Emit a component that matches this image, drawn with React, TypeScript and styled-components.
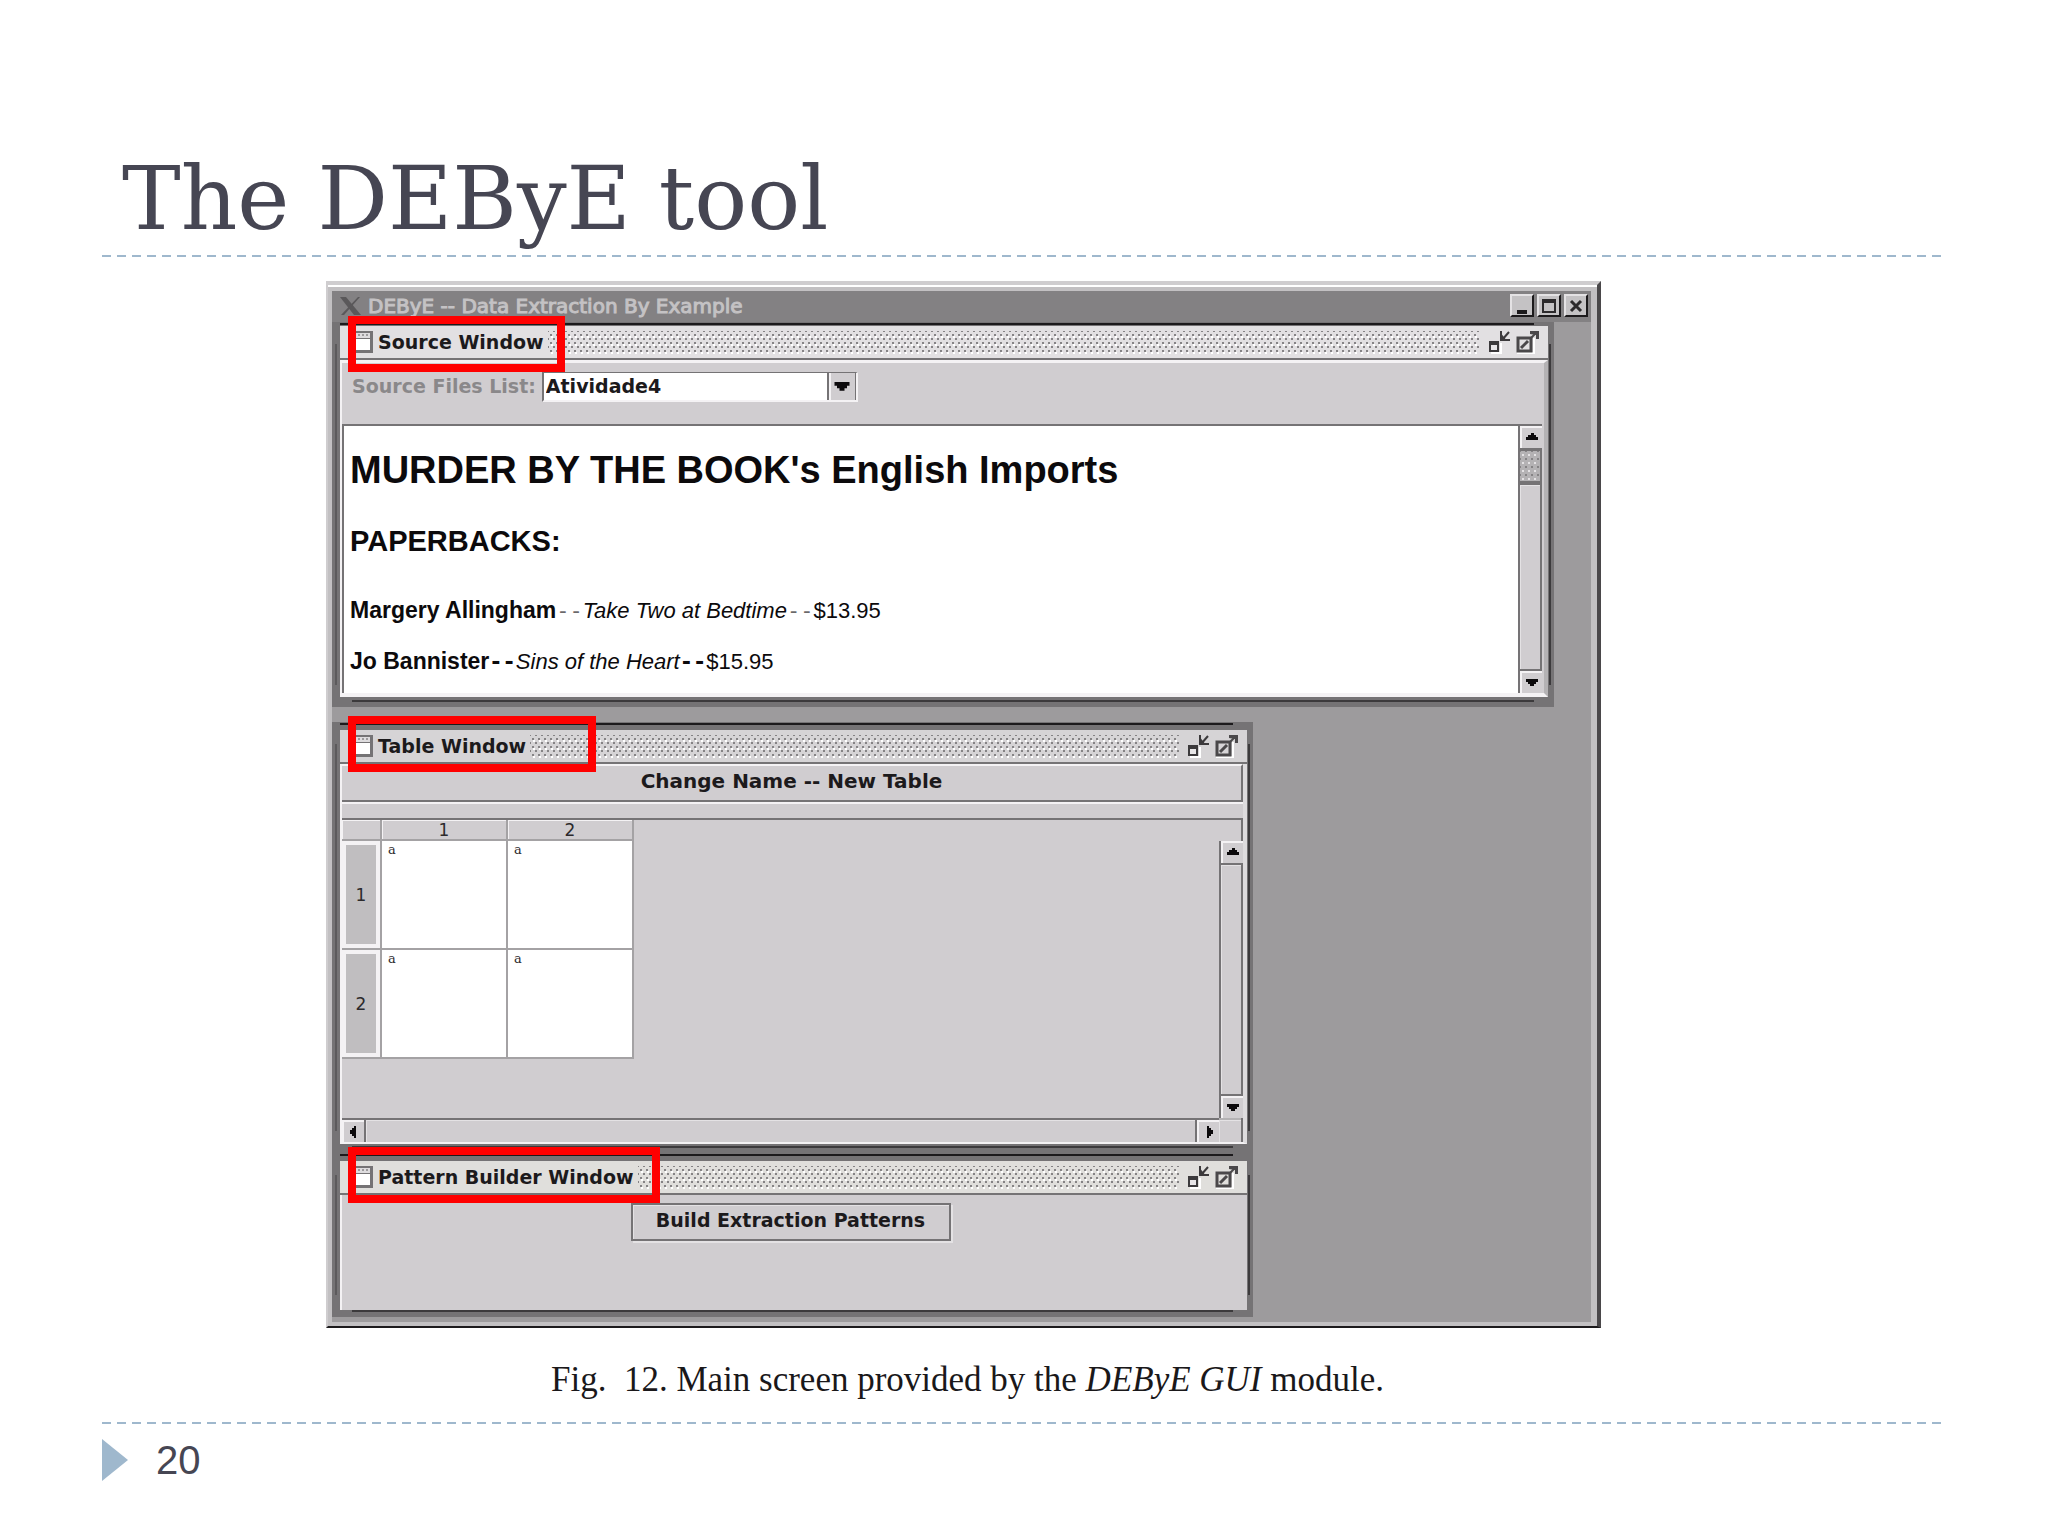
import React from "react";
import styled, { createGlobalStyle } from "styled-components";

const color = {
  ink: "#464653",
  accent: "#9fb8cd",
  panel: "#d0cdd0",
  light: "#f4f2f4",
  line: "#757375",
  frame: "#757375",
  dark: "#1c1a1c",
  desktop: "#9d9b9d",
  red: "#ff0000",
};

const uiFont = `"DejaVu Sans", Verdana, sans-serif`;
const docFont = `"Liberation Sans", Arial, sans-serif`;

const GlobalStyle = createGlobalStyle`
  *, *::before, *::after { box-sizing: border-box; }
  body { margin: 0; background: #fff; }
  h1, h2, h3, p, figure { margin: 0; }
  button, select { font: inherit; color: inherit; border-radius: 0; margin: 0; }
`;

/* ---------- slide ---------- */

const Slide = styled.div`
  min-height: 100vh;
  padding: 147px 102px 0;
  font-family: ${docFont};
`;

const SlideTitle = styled.h1`
  padding: 0 20px 4px;
  font: 400 88px/104px "DejaVu Serif", serif;
  color: ${color.ink};
`;

const DashedRule = styled.div`
  height: 2px;
  background: repeating-linear-gradient(90deg, ${color.accent} 0 9px, transparent 9px 15px);
`;

const Figure = styled.figure`
  max-width: 1275px;
  margin: 24px 0 22px 224px;
`;

const Caption = styled.figcaption`
  margin-top: 32px;
  padding-left: 8px;
  font: 400 35px/40px "Liberation Serif", "Times New Roman", serif;
  color: #1a181a;
  text-align: center;
  white-space: pre-wrap;
`;

const SlideFooter = styled.footer`
  display: flex;
  align-items: center;
  gap: 28px;
  padding-top: 12px;
  font-size: 40px;
  line-height: 48px;
  color: ${color.ink};
`;

/* ---------- application window ---------- */

const AppFrame = styled.div`
  border-style: solid;
  border-width: 4px 4px 2px 2px;
  border-color: #cfcdcf #4a484a #1c1a1c #cfcdcf;
`;

const AppBezel = styled.div`
  padding: 4px 6px 4px 4px;
  border-top: 2px solid #fff;
  background: #c2c0c2;
`;

const AppBar = styled.header`
  display: flex;
  align-items: center;
  gap: 6px;
  height: 31px;
  padding: 0 3px 2px 8px;
  background: #838183;
`;

const AppName = styled.h2`
  flex: 1;
  font: 400 20px/24px ${uiFont};
  color: #c4c2c4;
  -webkit-text-stroke: 1px #c4c2c4;
`;

const AppButtons = styled.div`
  display: flex;
  gap: 3px;
`;

const AppButton = styled.button`
  display: grid;
  place-items: center;
  width: 24px;
  height: 23px;
  padding: 0;
  border-style: solid;
  border-width: 2px;
  border-color: #e4e2e4 ${color.dark} ${color.dark} #e4e2e4;
  background: #c4c2c4;
`;

const Desktop = styled.div`
  padding-bottom: 5px;
  background: ${color.desktop};
`;

/* ---------- inner windows ---------- */

const edge = (c: string) => `linear-gradient(${c}, ${c})`;

const InnerFrame = styled.section<{ $right: number; $top: number; $bottom: number; $gap?: number }>`
  position: relative;
  margin: ${(p) => p.$gap ?? 0}px ${(p) => p.$right}px 0 0;
  padding: ${(p) => p.$top}px 6px ${(p) => p.$bottom}px 8px;
  background:
    ${edge(color.dark)} 8px 1px / calc(100% - 28px) 2px no-repeat,
    ${edge("#3c3a3c")} 20px calc(100% - 5px) / calc(100% - 40px) 2px no-repeat,
    ${edge("#3c3a3c")} calc(100% - 3px) 22px / 2px calc(100% - 44px) no-repeat,
    ${edge("#5c5a5c")} 3px 22px / 2px calc(100% - 44px) no-repeat,
    ${color.frame};
`;

const InnerBar = styled.header<{ $tone: string }>`
  display: flex;
  align-items: center;
  gap: 4px;
  height: 34px;
  padding: 0 8px 0 12px;
  border-bottom: 2px solid ${color.line};
  background: ${(p) => p.$tone};
`;

const InnerName = styled.h3`
  font: 700 19px/24px ${uiFont};
  color: ${color.dark};
`;

const Grip = styled.div`
  flex: 1;
  height: 23px;
  margin-right: 4px;
  background:
    radial-gradient(circle, #858385 1px, transparent 1px) 0 0 / 6px 8px,
    radial-gradient(circle, #858385 1px, transparent 1px) 3px 4px / 6px 8px,
    radial-gradient(circle, #ffffff 1px, transparent 1px) 1px 2px / 6px 8px;
`;

const BarButton = styled.button`
  display: grid;
  width: 24px;
  height: 24px;
  padding: 0;
  border: 0;
  background: none;
`;

const InnerBody = styled.div`
  border-style: solid;
  border-width: 3px 4px 4px 2px;
  border-color: ${color.light} #b4b2b4 ${color.light} ${color.light};
  background: ${color.panel};
`;

const TableBody = styled(InnerBody)`
  border-width: 0 4px 2px 2px;
  border-right-color: #dedcde;
`;

const PatternBody = styled(InnerBody)`
  display: flex;
  justify-content: center;
  align-items: flex-start;
  height: 115px;
  padding: 8px 8px 0 0;
  border-width: 0 0 0 2px;
`;

const Highlight = styled.div<{ $width: number }>`
  position: absolute;
  top: -6px;
  left: 16px;
  width: ${(p) => p.$width}px;
  height: 56px;
  border: 8px solid ${color.red};
  pointer-events: none;
`;

/* ---------- source window ---------- */

const Toolbar = styled.div`
  display: flex;
  align-items: flex-start;
  gap: 6px;
  height: 61px;
  padding: 9px 10px 0;
  font: 700 19px/28px ${uiFont};
`;

const ToolLabel = styled.label`
  color: #8a888a;
`;

const Combo = styled.div`
  display: grid;
  grid-template-columns: 1fr 29px;
  width: 316px;
  height: 30px;
  border-style: solid;
  border-width: 1px 2px 2px 2px;
  border-color: ${color.line} ${color.light} ${color.light} ${color.line};
`;

const ComboField = styled.select`
  grid-area: 1 / 1 / 2 / 3;
  appearance: none;
  width: 100%;
  height: 27px;
  padding: 0 32px 0 2px;
  border: 0;
  outline: 0;
  background: #fff;
  line-height: 27px;
  color: ${color.dark};
`;

const ComboArrow = styled.span`
  grid-area: 1 / 2 / 2 / 3;
  display: grid;
  place-items: center;
  border-left: 2px solid ${color.line};
  border-right: 1px solid ${color.line};
  box-shadow: inset 2px 0 0 ${color.light};
  background: ${color.panel};
  pointer-events: none;
`;

const SourcePane = styled.div`
  display: flex;
  margin-right: 2px;
  border-top: 2px solid ${color.line};
  border-left: 2px solid ${color.line};
  background: #fff;
`;

const Article = styled.article`
  flex: 1;
  padding: 22px 6px 16px;
  font: 400 22px/30px ${docFont};
  color: #0c0a0c;
`;

const ArticleTitle = styled.h2`
  font-size: 38px;
  line-height: 44px;
  margin-bottom: 33px;
`;

const ArticleSection = styled.h3`
  font-size: 29px;
  line-height: 32px;
  margin-bottom: 38px;
`;

const Entry = styled.p`
  & + & {
    margin-top: 20px;
  }
`;

const Author = styled.b`
  font-size: 23px;
`;

const Dash = styled.span<{ $strong?: boolean }>`
  font-family: "DejaVu Sans Mono", monospace;
  font-weight: ${(p) => (p.$strong ? 700 : 400)};
  color: ${(p) => (p.$strong ? "inherit" : "#6a686a")};
`;

/* ---------- scroll bars ---------- */

const VBar = styled.div<{ $top?: number }>`
  display: flex;
  flex-direction: column;
  width: 24px;
  margin-top: ${(p) => p.$top ?? 0}px;
  border-left: 2px solid ${color.line};
  background: ${color.panel};
`;

const HBar = styled.div`
  display: flex;
  height: 24px;
  border-top: 2px solid ${color.line};
  background: ${color.panel};
`;

const ScrollButton = styled.button`
  display: grid;
  place-items: center;
  flex: none;
  width: 22px;
  height: 22px;
  padding: 0;
  border-style: solid;
  border-width: 2px 0 0 2px;
  border-color: ${color.light};
  background: ${color.panel};
`;

const Thumb = styled.div`
  height: 35px;
  border-top: 3px solid ${color.line};
  border-bottom: 2px solid ${color.line};
  border-right: 2px solid ${color.line};
  background:
    radial-gradient(circle, #e4e2e4 1px, transparent 1px) 0 0 / 6px 8px,
    radial-gradient(circle, #858385 1px, transparent 1px) 3px 4px / 6px 8px,
    #b4b2b4;
`;

const Track = styled.div<{ $across?: boolean }>`
  flex: 1;
  border-style: solid;
  border-color: ${color.line};
  border-width: ${(p) => (p.$across ? "0 2px" : "2px 2px 2px 0")};
  box-shadow: inset 1px 1px 0 #e4e2e4;
`;

/* ---------- table window ---------- */

const NameButton = styled.button`
  display: block;
  width: 100%;
  height: 38px;
  padding: 0 0 5px;
  border-style: solid;
  border-width: 2px 2px 2px 0;
  border-color: ${color.light} ${color.line} ${color.line} ${color.light};
  box-shadow: 0 2px 0 ${color.light};
  background: ${color.panel};
  font: 700 20px/24px ${uiFont};
  color: ${color.dark};
`;

const ScrollPane = styled.div`
  display: grid;
  grid-template-columns: 1fr 22px;
  grid-template-rows: 298px 24px;
  margin-top: 16px;
  border-top: 2px solid ${color.line};
  border-right: 2px solid ${color.line};
`;

const Corner = styled.div`
  border-top: 2px solid #b4b2b4;
  box-shadow: inset 1px 1px 0 #e4e2e4;
`;

const Grid = styled.table`
  align-self: start;
  justify-self: start;
  table-layout: fixed;
  width: 292px;
  border-spacing: 0;
  font: 400 17px/18px ${uiFont};
  color: #2c2a2c;

  th, td {
    padding: 0;
    font-weight: 400;
    border-right: 2px solid #a4a2a4;
    border-bottom: 2px solid #a4a2a4;
  }
`;

const ColHead = styled.th<{ $width: number }>`
  width: ${(p) => p.$width}px;
  height: 21px;
  box-shadow: inset 1px 1px 0 ${color.light};
  background: ${color.panel};
`;

const RowHead = styled.th`
  height: 109px;
  box-shadow: inset 0 0 0 4px ${color.light};
  background: #c0bec0;
`;

const Cell = styled.td`
  background: #fff;
  vertical-align: top;
  padding-top: 2px;
  font: 400 13px/18px "DejaVu Serif", serif;
  text-indent: 6px;
`;

/* ---------- pattern builder window ---------- */

const BuildButton = styled.button`
  width: 320px;
  height: 38px;
  padding: 0 0 4px;
  border: 2px solid ${color.line};
  box-shadow: inset 1px 1px 0 #e4e2e4, 2px 2px 0 #e4e2e4;
  background: ${color.panel};
  font: 700 19px/24px ${uiFont};
  color: ${color.dark};
`;

/* ---------- icons ---------- */

const SlideMarker = () => (
  <svg width="26" height="42" viewBox="0 0 26 42" aria-hidden="true">
    <path d="M0 0L26 21L0 42Z" fill={color.accent} />
  </svg>
);

const XLogo = () => (
  <svg width="22" height="20" viewBox="0 0 22 20" aria-hidden="true">
    <path d="M0 1H6L21 19H14Z" fill="#5a585a" />
    <path d="M18 1H20L4 19H1Z" fill="#5a585a" />
  </svg>
);

const DocIcon = () => (
  <svg width="22" height="24" viewBox="0 0 22 24" aria-hidden="true">
    <rect x="3" y="1" width="18" height="22" fill={color.line} />
    <rect x="4" y="3" width="14" height="5" fill="#dedcde" />
    <rect x="4" y="9" width="14" height="11" fill="#fff" />
    <path d="M6 5H8M10 5H12M14 5H16" stroke="#9d9b9d" strokeWidth="2" />
  </svg>
);

const IconifyIcon = () => (
  <svg width="24" height="24" viewBox="0 0 24 24" fill="none" stroke="#3c3a3c" aria-hidden="true">
    <path d="M3 23H13V13" stroke="#fff" strokeWidth="2" />
    <rect x="2" y="13" width="8" height="8" strokeWidth="2" fill="#e8e6e8" />
    <path d="M1 13H11" strokeWidth="4" />
    <path d="M13 1V10H22M14 10L21 2" strokeWidth="2" />
    <path d="M12 2V11H19Z" fill="#3c3a3c" stroke="none" />
  </svg>
);

const MaximizeIcon = () => (
  <svg width="24" height="24" viewBox="0 0 24 24" fill="none" stroke="#4a484a" aria-hidden="true">
    <path d="M1 23H18V8" stroke="#fff" strokeWidth="2" />
    <rect x="2" y="8" width="13" height="13" strokeWidth="3" />
    <path d="M5 18L12 11" strokeWidth="3" />
    <path d="M15 8L20 3" strokeWidth="2" />
    <path d="M14 1H23V9H20V5L14 4Z" fill="#4a484a" stroke="none" />
  </svg>
);

const arrows = {
  up: "M7 3H10V5H12V7H14V10H2V7H4V5H7Z",
  down: "M2 4H14V7H12V9H10V11H6V9H4V7H2Z",
  left: "M10 2V14H8V12H6V10H4V6H6V4H8V2Z",
  right: "M6 2V14H8V12H10V10H12V6H10V4H8V2Z",
};

const Arrow = ({ dir, size = 16 }: { dir: keyof typeof arrows; size?: number }) => (
  <svg width={size} height={size} viewBox="0 0 16 16" aria-hidden="true">
    <path d={arrows[dir]} fill="#0c0a0c" />
  </svg>
);

/* ---------- composition ---------- */

const WindowBar = ({ name, tone }: { name: string; tone: string }) => (
  <InnerBar $tone={tone}>
    <DocIcon />
    <InnerName>{name}</InnerName>
    <Grip />
    <BarButton aria-label={`Iconify ${name}`}>
      <IconifyIcon />
    </BarButton>
    <BarButton aria-label={`Maximize ${name}`}>
      <MaximizeIcon />
    </BarButton>
  </InnerBar>
);

const SourceWindow = () => (
  <InnerFrame $right={37} $top={4} $bottom={10}>
    <WindowBar name="Source Window" tone="#e2e0e2" />
    <InnerBody>
      <Toolbar>
        <ToolLabel htmlFor="source-file">Source Files List:</ToolLabel>
        <Combo>
          <ComboField id="source-file" defaultValue="Atividade4">
            <option>Atividade4</option>
          </ComboField>
          <ComboArrow>
            <Arrow dir="down" size={20} />
          </ComboArrow>
        </Combo>
      </Toolbar>
      <SourcePane>
        <Article>
          <ArticleTitle>MURDER BY THE BOOK's English Imports</ArticleTitle>
          <ArticleSection>PAPERBACKS:</ArticleSection>
          <Entry>
            <Author>Margery Allingham</Author>
            <Dash>--</Dash>
            <i>Take Two at Bedtime</i>
            <Dash>--</Dash>$13.95
          </Entry>
          <Entry>
            <Author>Jo Bannister</Author>
            <Dash $strong>--</Dash>
            <i>Sins of the Heart</i>
            <Dash $strong>--</Dash>$15.95
          </Entry>
        </Article>
        <VBar>
          <ScrollButton aria-label="Scroll up">
            <Arrow dir="up" />
          </ScrollButton>
          <Thumb />
          <Track />
          <ScrollButton aria-label="Scroll down">
            <Arrow dir="down" />
          </ScrollButton>
        </VBar>
      </SourcePane>
    </InnerBody>
    <Highlight $width={217} />
  </InnerFrame>
);

const TableWindow = () => (
  <InnerFrame $right={338} $top={8} $bottom={9} $gap={15}>
    <WindowBar name="Table Window" tone="#d6d4d6" />
    <TableBody>
      <NameButton>Change Name -- New Table</NameButton>
      <ScrollPane>
        <Grid>
          <thead>
            <tr>
              <ColHead $width={40} />
              <ColHead $width={126}>1</ColHead>
              <ColHead $width={126}>2</ColHead>
            </tr>
          </thead>
          <tbody>
            {[1, 2].map((row) => (
              <tr key={row}>
                <RowHead scope="row">{row}</RowHead>
                <Cell>a</Cell>
                <Cell>a</Cell>
              </tr>
            ))}
          </tbody>
        </Grid>
        <VBar $top={21}>
          <ScrollButton aria-label="Scroll table up">
            <Arrow dir="up" />
          </ScrollButton>
          <Track />
          <ScrollButton aria-label="Scroll table down">
            <Arrow dir="down" />
          </ScrollButton>
        </VBar>
        <HBar>
          <ScrollButton aria-label="Scroll table left">
            <Arrow dir="left" />
          </ScrollButton>
          <Track $across />
          <ScrollButton aria-label="Scroll table right">
            <Arrow dir="right" />
          </ScrollButton>
        </HBar>
        <Corner />
      </ScrollPane>
    </TableBody>
    <Highlight $width={248} />
  </InnerFrame>
);

const PatternWindow = () => (
  <InnerFrame $right={338} $top={8} $bottom={7}>
    <WindowBar name="Pattern Builder Window" tone="#e0dfdc" />
    <PatternBody>
      <BuildButton>Build Extraction Patterns</BuildButton>
    </PatternBody>
    <Highlight $width={312} />
  </InnerFrame>
);

export default function App() {
  return (
    <Slide>
      <GlobalStyle />
      <SlideTitle>The DEByE tool</SlideTitle>
      <DashedRule />
      <Figure>
        <AppFrame>
          <AppBezel>
            <AppBar>
              <XLogo />
              <AppName>DEByE -- Data Extraction By Example</AppName>
              <AppButtons>
                <AppButton aria-label="Minimize">
                  <svg width="18" height="18" viewBox="0 0 18 18">
                    <path d="M4 13H14V17H4Z" fill="#1c1a1c" />
                  </svg>
                </AppButton>
                <AppButton aria-label="Maximize">
                  <svg width="18" height="18" viewBox="0 0 18 18">
                    <path d="M2 2H16V16H2ZM4 6V14H14V6Z" fill="#2c2a2c" fillRule="evenodd" />
                  </svg>
                </AppButton>
                <AppButton aria-label="Close">
                  <svg width="18" height="18" viewBox="0 0 18 18">
                    <path d="M4 4L14 14M14 4L4 14" stroke="#2c2a2c" strokeWidth="3" />
                  </svg>
                </AppButton>
              </AppButtons>
            </AppBar>
            <Desktop>
              <SourceWindow />
              <TableWindow />
              <PatternWindow />
            </Desktop>
          </AppBezel>
        </AppFrame>
        <Caption>
          {"Fig.  12. Main screen provided by the "}
          <i>DEByE GUI</i> module.
        </Caption>
      </Figure>
      <DashedRule />
      <SlideFooter>
        <SlideMarker />
        <span>20</span>
      </SlideFooter>
    </Slide>
  );
}
